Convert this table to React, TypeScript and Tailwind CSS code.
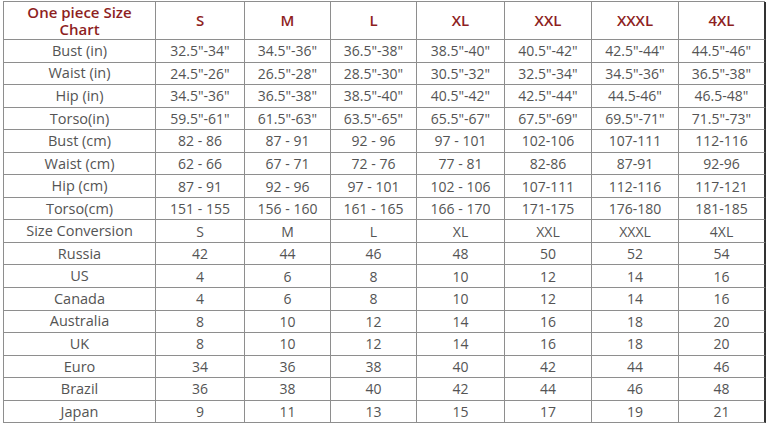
const SIZES = ["S", "M", "L", "XL", "XXL", "XXXL", "4XL"];

const ROWS: [string, string[]][] = [
  ["Bust (in)", ['32.5"-34"', '34.5"-36"', '36.5"-38"', '38.5"-40"', '40.5"-42"', '42.5"-44"', '44.5"-46"']],
  ["Waist (in)", ['24.5"-26"', '26.5"-28"', '28.5"-30"', '30.5"-32"', '32.5"-34"', '34.5"-36"', '36.5"-38"']],
  ["Hip (in)", ['34.5"-36"', '36.5"-38"', '38.5"-40"', '40.5"-42"', '42.5"-44"', '44.5-46"', '46.5-48"']],
  ["Torso(in)", ['59.5"-61"', '61.5"-63"', '63.5"-65"', '65.5"-67"', '67.5"-69"', '69.5"-71"', '71.5"-73"']],
  ["Bust (cm)", ["82 - 86", "87 - 91", "92 - 96", "97 - 101", "102-106", "107-111", "112-116"]],
  ["Waist (cm)", ["62 - 66", "67 - 71", "72 - 76", "77 - 81", "82-86", "87-91", "92-96"]],
  ["Hip (cm)", ["87 - 91", "92 - 96", "97 - 101", "102 - 106", "107-111", "112-116", "117-121"]],
  ["Torso(cm)", ["151 - 155", "156 - 160", "161 - 165", "166 - 170", "171-175", "176-180", "181-185"]],
  ["Size Conversion", ["S", "M", "L", "XL", "XXL", "XXXL", "4XL"]],
  ["Russia", ["42", "44", "46", "48", "50", "52", "54"]],
  ["US", ["4", "6", "8", "10", "12", "14", "16"]],
  ["Canada", ["4", "6", "8", "10", "12", "14", "16"]],
  ["Australia", ["8", "10", "12", "14", "16", "18", "20"]],
  ["UK", ["8", "10", "12", "14", "16", "18", "20"]],
  ["Euro", ["34", "36", "38", "40", "42", "44", "46"]],
  ["Brazil", ["36", "38", "40", "42", "44", "46", "48"]],
  ["Japan", ["9", "11", "13", "15", "17", "19", "21"]],
];

const cell =
  "flex items-center justify-center border-r border-b border-[#8e8e8e] text-center";

export default function App() {
  return (
    <div className="w-[768px] h-[423px] overflow-hidden bg-white pt-px pl-[3px] font-['Open_Sans',sans-serif]">
      {/* Size chart grid */}
      <div className="grid grid-cols-[152px_89px_86px_86px_88px_87px_87px_87px] grid-rows-[38px_repeat(17,22.56px)] border-t border-l border-[#8e8e8e] w-[762px]">
        <div className={`${cell} flex-col text-[15px] leading-[17px] font-semibold text-[#8e1f1f]`}>
          <span>One piece Size</span>
          <span>Chart</span>
        </div>
        {SIZES.map((s, i) => (
          <div
            key={s}
            className={`${cell} text-[15px] font-semibold text-[#8e1f1f] ${i === 6 ? "border-r-2 border-r-[#333]" : ""}`}
          >
            {s}
          </div>
        ))}
        {ROWS.map(([label, vals]) => (
          <>
            <div key={label} className={`${cell} text-[14.5px] text-[#545454]`}>
              {label}
            </div>
            {vals.map((v, i) => (
              <div
                key={label + i}
                className={`${cell} text-[14px] text-[#545454] ${i === 6 ? "border-r-2 border-r-[#333]" : ""}`}
              >
                {v}
              </div>
            ))}
          </>
        ))}
      </div>
    </div>
  );
}
